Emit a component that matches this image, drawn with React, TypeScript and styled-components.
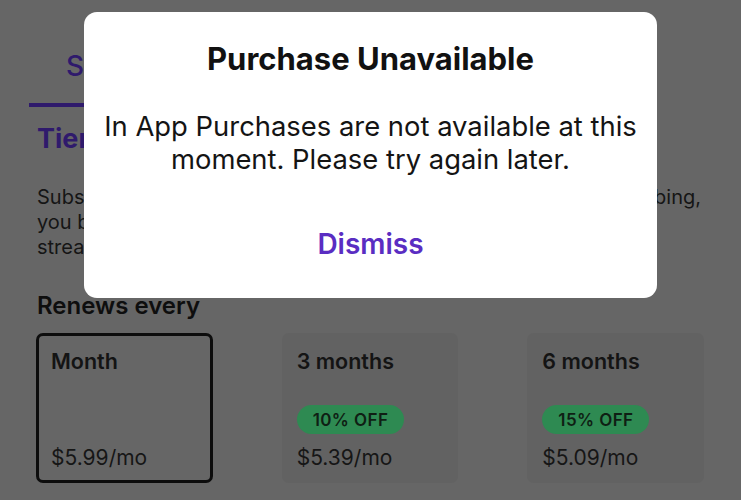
import styled, { createGlobalStyle } from "styled-components";

const GlobalStyle = createGlobalStyle`
  html, body {
    margin: 0;
    padding: 0;
    background: #666666;
  }
  body {
    font-family: Inter, "Noto Sans", "Liberation Sans", sans-serif;
    -webkit-font-smoothing: antialiased;
  }
`;

const Screen = styled.div`
  position: relative;
  width: 741px;
  height: 500px;
  overflow: hidden;
  background: #666666;
  color: #111111;
`;

const Page = styled.div`
  display: flex;
  flex-direction: column;
  padding-top: 49px;
`;

const Tabs = styled.div`
  display: flex;
  padding: 0 29px;
`;

const Tab = styled.div<{ active?: boolean }>`
  width: 220px;
  box-sizing: border-box;
  padding: 0 0 20px 37px;
  font-size: 28px;
  line-height: 34px;
  font-weight: 500;
  color: ${(p) => (p.active ? "#2f1a6c" : "#1c1c1c")};
  border-bottom: 4px solid ${(p) => (p.active ? "#2f1a6c" : "transparent")};
`;

const Body = styled.div`
  display: flex;
  flex-direction: column;
  padding: 0 37px;
`;

const Heading = styled.h2`
  margin: 15px 0 0;
  font-size: 27px;
  font-weight: 700;
  line-height: 34px;
  color: #2f1a6c;
`;

const Paragraph = styled.p`
  margin: 29px 0 0;
  width: 664px;
  font-size: 20px;
  line-height: 25px;
  color: #151515;
`;

const Line = styled.span<{ justify?: boolean }>`
  display: block;
  white-space: nowrap;
  text-align: ${(p) => (p.justify ? "justify" : "left")};
  text-align-last: ${(p) => (p.justify ? "justify" : "left")};
`;

const SectionTitle = styled.h3`
  margin: 31px 0 0;
  font-size: 24px;
  font-weight: 600;
  line-height: 30px;
  color: #0e0e0e;
`;

const Plans = styled.div`
  display: grid;
  grid-template-columns: repeat(3, 1fr);
  gap: 69px;
  margin: 12px 0 0 -1px;
  width: 668px;
`;

const Plan = styled.div<{ selected?: boolean }>`
  box-sizing: border-box;
  height: 150px;
  display: flex;
  flex-direction: column;
  padding: ${(p) => (p.selected ? "12px 12px 9px" : "15px 15px 12px")};
  border-radius: 7px;
  border: ${(p) => (p.selected ? "3px solid #0d0d0d" : "none")};
  background: ${(p) => (p.selected ? "transparent" : "#626262")};
`;

const PlanName = styled.div`
  font-size: 21.5px;
  font-weight: 600;
  line-height: 26px;
  color: #141414;
`;

const PlanBottom = styled.div`
  margin-top: auto;
  display: flex;
  flex-direction: column;
  align-items: flex-start;
  gap: 11px;
`;

const Badge = styled.span`
  display: inline-flex;
  align-items: center;
  height: 29px;
  padding: 0 16px;
  border-radius: 15px;
  background: #2e8a52;
  font-size: 17px;
  font-weight: 600;
  letter-spacing: 0.4px;
  color: #0f1f14;
`;

const Price = styled.div`
  font-size: 21px;
  line-height: 26px;
  color: #161616;
`;

const Alert = styled.div`
  position: absolute;
  left: 84px;
  top: 12px;
  width: 573px;
  height: 286px;
  box-sizing: border-box;
  background: #ffffff;
  border-radius: 13px;
  display: flex;
  flex-direction: column;
  align-items: center;
  padding: 28px 10px 0;
  text-align: center;
`;

const AlertTitle = styled.div`
  font-size: 31px;
  font-weight: 700;
  line-height: 38px;
  color: #111111;
`;

const AlertMessage = styled.div`
  margin-top: 32px;
  font-size: 27.4px;
  line-height: 33px;
  color: #141414;
`;

const AlertAction = styled.button`
  margin-top: 51px;
  border: none;
  background: none;
  padding: 0;
  font-family: inherit;
  font-size: 28px;
  font-weight: 600;
  line-height: 34px;
  color: #5a2dc2;
`;

const plans = [
  { name: "Month", price: "$5.99/mo", selected: true },
  { name: "3 months", price: "$5.39/mo", off: "10% OFF" },
  { name: "6 months", price: "$5.09/mo", off: "15% OFF" },
];

export default function App() {
  return (
    <Screen>
      <GlobalStyle />
      <Page>
        <Tabs>
          <Tab active>Subscribe</Tab>
          <Tab>Gift</Tab>
        </Tabs>
        <Body>
          <Heading>Tier 1 Subscription</Heading>
          <Paragraph>
            <Line justify>Subscribe to support the channel you love. By subscribing,</Line>
            <Line>you both get emotes, a</Line>
            <Line>streamer badge</Line>
          </Paragraph>
          <SectionTitle>Renews every</SectionTitle>
          <Plans>
            {plans.map((p) => (
              <Plan key={p.name} selected={p.selected}>
                <PlanName>{p.name}</PlanName>
                <PlanBottom>
                  {p.off && <Badge>{p.off}</Badge>}
                  <Price>{p.price}</Price>
                </PlanBottom>
              </Plan>
            ))}
          </Plans>
        </Body>
      </Page>
      <Alert>
        <AlertTitle>Purchase Unavailable</AlertTitle>
        <AlertMessage>
          In App Purchases are not available at this
          <br />
          moment. Please try again later.
        </AlertMessage>
        <AlertAction>Dismiss</AlertAction>
      </Alert>
    </Screen>
  );
}
